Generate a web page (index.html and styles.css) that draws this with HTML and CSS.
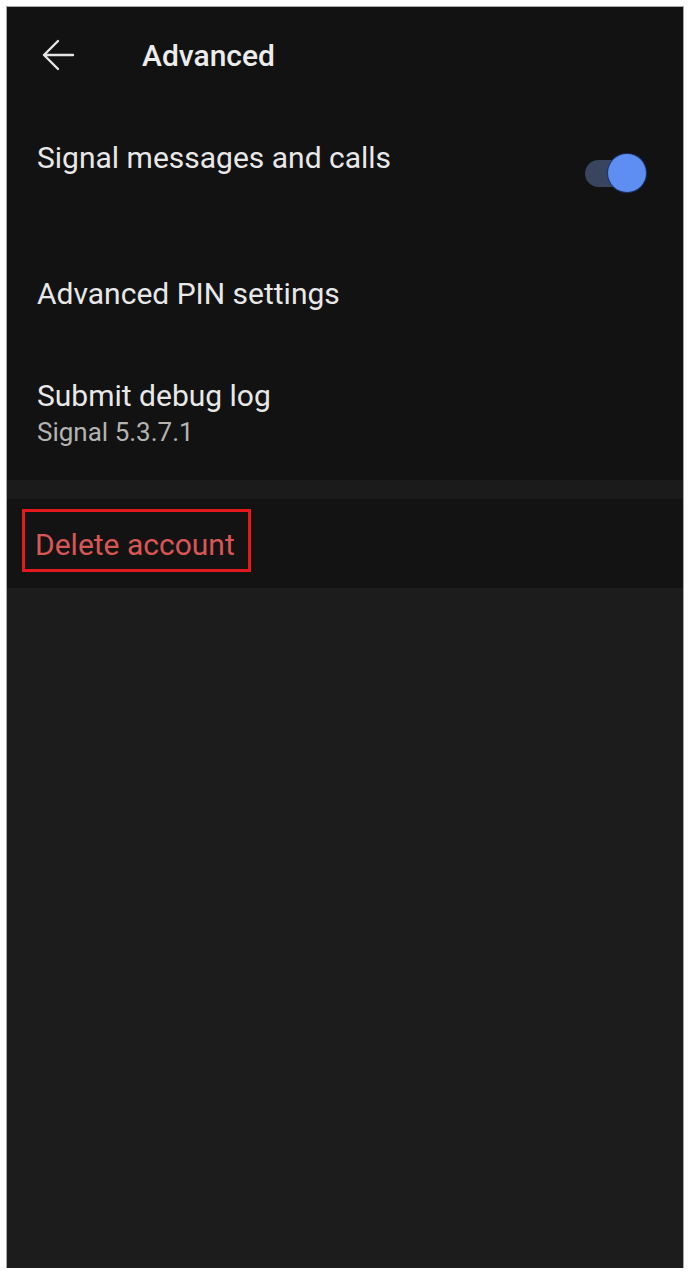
FILE: index.html
```html
<!DOCTYPE html>
<html lang="en">
<head>
<meta charset="utf-8">
<title>Advanced</title>
<link rel="stylesheet" href="styles.css">
</head>
<body>
<div class="screen">
  <header class="appbar">
    <svg class="back" width="34" height="34" viewBox="0 0 34 34" aria-hidden="true">
      <path d="M32 17H3M17 3L3 17L17 31" fill="none" stroke="#e4e4e4" stroke-width="2.4" stroke-linecap="round" stroke-linejoin="round"/>
    </svg>
    <h1 class="title">Advanced</h1>
  </header>
  <section class="group">
    <div class="row row-switch">
      <div class="label">Signal messages and calls</div>
      <div class="toggle"><span class="track"></span><span class="knob"></span></div>
    </div>
    <div class="row row-pin">
      <div class="label">Advanced PIN settings</div>
    </div>
    <div class="row row-debug">
      <div class="label">Submit debug log</div>
      <div class="sub">Signal 5.3.7.1</div>
    </div>
  </section>
  <div class="divider"></div>
  <section class="danger">
    <span class="highlight"><span class="delete">Delete account</span></span>
  </section>
  <div class="rest"></div>
</div>
</body>
</html>
```
FILE: styles.css
```css
html, body {
  margin: 0;
  padding: 0;
  background: #ffffff;
}
body {
  font-family: Roboto, "Noto Sans", "Liberation Sans", sans-serif;
  -webkit-font-smoothing: antialiased;
}
.screen {
  margin: 7px 0 0 7px;
  width: 676px;
  height: 1261px;
  background: #1c1c1c;
  box-shadow: 0 0 0 1px #a8a8a8;
  display: flex;
  flex-direction: column;
}
.appbar {
  height: 96px;
  flex: none;
  display: flex;
  align-items: center;
  padding-left: 34px;
  gap: 67px;
  background: #121212;
}
.back {
  display: block;
  flex: none;
}
.title {
  margin: 0;
  font-size: 30px;
  font-weight: 500;
  line-height: 35px;
  color: #ececec;
  padding-top: 1px;
}
.group {
  background: #121212;
  display: flex;
  flex-direction: column;
}
.row {
  padding: 0 37px 0 30px;
  box-sizing: border-box;
}
.label {
  font-size: 30px;
  line-height: 35px;
  color: #e8e8e8;
}
.row-switch {
  height: 137px;
  padding-top: 37px;
  display: flex;
  justify-content: space-between;
  align-items: flex-start;
}
.toggle {
  position: relative;
  width: 61px;
  height: 38px;
  margin-top: 14px;
  flex: none;
}
.track {
  position: absolute;
  left: 0;
  top: 6px;
  width: 46px;
  height: 27px;
  border-radius: 14px;
  background: #39445e;
}
.knob {
  position: absolute;
  right: 0;
  top: 0;
  width: 38px;
  height: 38px;
  border-radius: 50%;
  background: #5e8ef2;
  box-shadow: 0 0 0 1px #1b3470;
}
.row-pin {
  height: 106px;
  display: flex;
  align-items: center;
}
.row-debug {
  height: 134px;
  padding-top: 32px;
}
.sub {
  margin-top: 4px;
  font-size: 26px;
  line-height: 30px;
  color: #b3b3b3;
}
.divider {
  height: 19px;
  flex: none;
  background: #1b1b1b;
}
.danger {
  height: 89px;
  flex: none;
  background: #131313;
  display: flex;
  align-items: center;
  padding-left: 15px;
}
.highlight {
  display: inline-flex;
  border: 3px solid #e3191b;
  padding: 15px 13px 7px 10px;
  margin-bottom: 6px;
}
.delete {
  font-size: 30px;
  line-height: 35px;
  color: #d95656;
}
.rest {
  flex: 1;
  background: #1c1c1c;
}
```
